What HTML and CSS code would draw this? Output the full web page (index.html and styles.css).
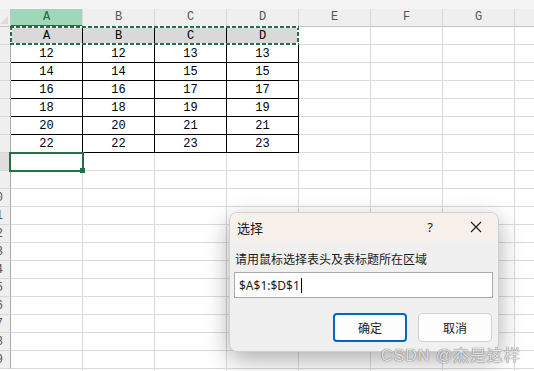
FILE: index.html
```html
<!DOCTYPE html>
<html lang="zh-CN">
<head>
    <meta charset="UTF-8">
    <meta name="viewport" content="width=device-width, initial-scale=1.0">
    <title>选择</title>
    <link rel="stylesheet" href="styles.css">
</head>
<body>
    <div class="sheet">
        <div class="toolbar"></div>
        <div class="col-heads">
            <div class="corner"><span class="corner-tri"></span></div>
            <div class="col-head active">A</div>
            <div class="col-head">B</div>
            <div class="col-head">C</div>
            <div class="col-head">D</div>
            <div class="col-head">E</div>
            <div class="col-head">F</div>
            <div class="col-head">G</div>
            <div class="col-head"></div>
        </div>
        <div class="grid-body">
            <div class="row-heads">
                <div class="row-head"></div>
                <div class="row-head"></div>
                <div class="row-head"></div>
                <div class="row-head"></div>
                <div class="row-head"></div>
                <div class="row-head"></div>
                <div class="row-head"></div>
                <div class="row-head active"></div>
                <div class="row-head"></div>
                <div class="row-head">10</div>
                <div class="row-head">11</div>
                <div class="row-head">12</div>
                <div class="row-head">13</div>
                <div class="row-head">14</div>
                <div class="row-head">15</div>
                <div class="row-head">16</div>
                <div class="row-head">17</div>
                <div class="row-head">18</div>
                <div class="row-head">19</div>
            </div>
            <div class="cells">
                <div class="data">
                    <div class="head">A</div><div class="head">B</div><div class="head">C</div><div class="head">D</div>
                    <div>12</div><div>12</div><div>13</div><div>13</div>
                    <div>14</div><div>14</div><div>15</div><div>15</div>
                    <div>16</div><div>16</div><div>17</div><div>17</div>
                    <div>18</div><div>18</div><div>19</div><div>19</div>
                    <div>20</div><div>20</div><div>21</div><div>21</div>
                    <div>22</div><div>22</div><div>23</div><div>23</div>
                </div>
                <div class="marquee"></div>
                <div class="selection"><span class="fill-handle"></span></div>
            </div>
        </div>

        <div class="dialog">
            <div class="dialog-title">
                <span class="title-text">选择</span>
                <span class="help">?</span>
                <svg class="close" width="12" height="12" viewBox="0 0 12 12">
                    <path d="M1 1 L11 11 M11 1 L1 11" stroke="#1a1a1a" stroke-width="1.1" fill="none"/>
                </svg>
            </div>
            <div class="dialog-body">
                <label class="prompt">请用鼠标选择表头及表标题所在区域</label>
                <div class="range-input">$A$1:$D$1<span class="caret"></span></div>
                <div class="buttons">
                    <button class="btn primary">确定</button>
                    <button class="btn">取消</button>
                </div>
            </div>
        </div>

        <div class="watermark">CSDN @杰是这样</div>
    </div>
</body>
</html>
```

FILE: styles.css
```css
body {
    margin: 0;
    background: #fff;
    font-family: "Noto Sans", "Noto Sans CJK SC", sans-serif;
    overflow: hidden;
}

.sheet {
    position: relative;
    width: 534px;
    height: 371px;
    overflow: hidden;
    background: #fff;
}

.toolbar {
    height: 9px;
    background: #f4f4f4;
}

.col-heads {
    display: flex;
    height: 18px;
    background: #efefef;
}

.corner {
    position: relative;
    flex: none;
    width: 11px;
    box-sizing: border-box;
    border-right: 1px solid #c4c4c4;
    border-bottom: 1px solid #c4c4c4;
}

.corner-tri {
    position: absolute;
    right: 2px;
    bottom: 2px;
    width: 0;
    height: 0;
    border-left: 8px solid transparent;
    border-bottom: 8px solid #dcdcdc;
}

.col-head {
    flex: none;
    width: 72px;
    box-sizing: border-box;
    border-right: 1px solid #d8d8d8;
    border-bottom: 1px solid #c4c4c4;
    text-align: center;
    font: 12px/17px "Liberation Mono", monospace;
    color: #555;
}

.col-head.active {
    background: #a0d6b9;
    color: #1d6b40;
    border-bottom: 2px solid #217346;
    line-height: 16px;
}

.grid-body {
    display: flex;
}

.row-heads {
    flex: none;
    width: 11px;
}

.row-head {
    display: flex;
    justify-content: flex-end;
    height: 18px;
    box-sizing: border-box;
    padding-right: 7px;
    padding-top: 1px;
    overflow: hidden;
    background: #efefef;
    border-right: 1px solid #a9a9a9;
    border-bottom: 1px solid #d8d8d8;
    font: 12px/16px "Liberation Mono", monospace;
    color: #555;
}

.row-head.active {
    background: #dedede;
}

.cells {
    position: relative;
    flex: 1;
    height: 344px;
    background-image:
        repeating-linear-gradient(to right, transparent 0 71px, #dadada 71px 72px),
        repeating-linear-gradient(to bottom, transparent 0 17px, #dadada 17px 18px);
}

.data {
    display: grid;
    grid-template-columns: repeat(4, 72px);
    width: max-content;
    background: #fff;
}

.data div {
    height: 18px;
    box-sizing: border-box;
    padding-top: 1px;
    border-right: 1px solid #000;
    border-bottom: 1px solid #000;
    text-align: center;
    font: 12px/16px "Liberation Mono", monospace;
    color: #000;
}

.data .head {
    background: #d9d9d9;
}

/* copy marquee around A1:D1 */
.marquee {
    position: absolute;
    left: -1px;
    top: -1px;
    width: 289px;
    height: 19px;
    background:
        repeating-linear-gradient(to right, #217346 0 4px, #fff 4px 6px) top / 100% 2px no-repeat,
        repeating-linear-gradient(to right, #217346 0 4px, #fff 4px 6px) bottom / 100% 2px no-repeat,
        repeating-linear-gradient(to bottom, #217346 0 4px, #fff 4px 6px) left / 2px 100% no-repeat,
        repeating-linear-gradient(to bottom, #217346 0 4px, #fff 4px 6px) right / 2px 100% no-repeat;
}

.selection {
    position: absolute;
    left: -2px;
    top: 125px;
    width: 75px;
    height: 20px;
    box-sizing: border-box;
    border: 2px solid #217346;
}

.fill-handle {
    position: absolute;
    right: -3px;
    bottom: -3px;
    width: 5px;
    height: 5px;
    background: #217346;
}

.dialog {
    position: absolute;
    left: 229px;
    top: 212px;
    width: 270px;
    height: 140px;
    box-sizing: border-box;
    border: 1px solid #cfcfcf;
    border-radius: 8px;
    background: #f0f0f0;
    box-shadow: 0 8px 24px rgba(0, 0, 0, 0.32);
    overflow: hidden;
}

.dialog-title {
    display: flex;
    align-items: center;
    height: 28px;
    padding-left: 7px;
    background: #f8f0eb;
    font-size: 13px;
    color: #1a1a1a;
}

.title-text {
    flex: 1;
}

.help {
    width: 12px;
    margin-right: 34px;
    font-size: 13px;
    text-align: center;
}

.close {
    margin-right: 16px;
}

.dialog-body {
    display: flex;
    flex-direction: column;
    padding: 11px 5px 0 4px;
}

.prompt {
    height: 16px;
    padding-left: 1px;
    font-size: 12px;
    line-height: 16px;
    color: #1a1a1a;
}

.range-input {
    display: flex;
    align-items: center;
    height: 26px;
    margin-top: 4px;
    box-sizing: border-box;
    padding-left: 4px;
    background: #fff;
    border: 1px solid #ababab;
    font-size: 12px;
    color: #1a1a1a;
}

.caret {
    width: 1px;
    height: 15px;
    margin-left: 1px;
    background: #000;
}

.buttons {
    display: flex;
    justify-content: flex-end;
    gap: 11px;
    margin-top: 15px;
    padding-right: 1px;
}

.btn {
    width: 74px;
    height: 29px;
    box-sizing: border-box;
    background: #fdfdfd;
    border: 1px solid #d0d0d0;
    border-radius: 4px;
    font-family: "Noto Sans CJK SC", sans-serif;
    font-size: 12px;
    color: #1a1a1a;
    padding: 0;
}

.btn.primary {
    border: 2px solid #0067c0;
}

.watermark {
    position: absolute;
    left: 381px;
    top: 342px;
    font-family: "Liberation Sans", "Noto Sans CJK SC", sans-serif;
    font-size: 16px;
    letter-spacing: 1px;
    color: rgba(240, 240, 240, 0.9);
    text-shadow: 0 0 1px #777, 0 0 1px #777;
    white-space: nowrap;
}
```
